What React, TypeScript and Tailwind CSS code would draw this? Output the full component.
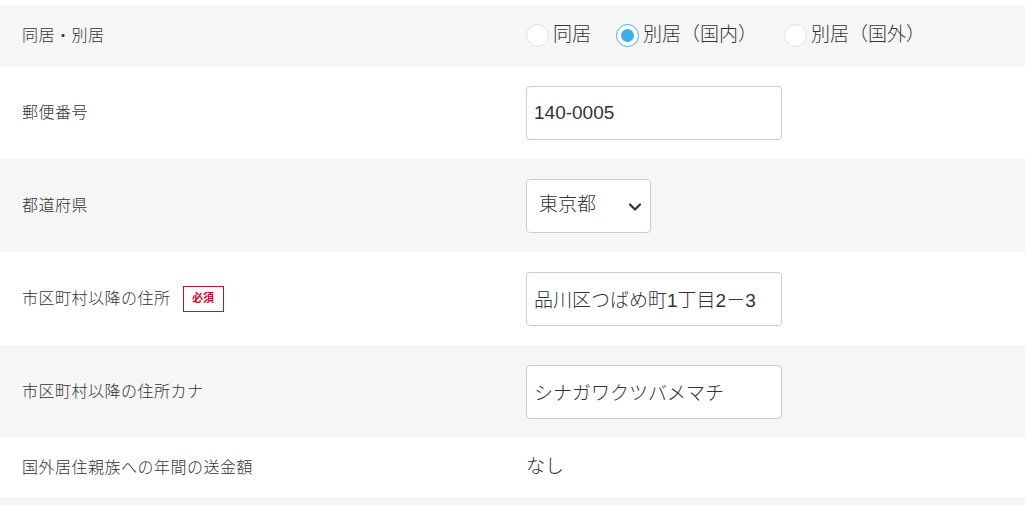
import React from 'react';

const font = { fontFamily: '"Liberation Sans", "Noto Sans CJK JP", sans-serif' };

function Radio({ label, checked }: { label: string; checked?: boolean }) {
  return (
    <label className="flex items-center cursor-pointer">
      <span
        className={`w-[23px] h-[23px] rounded-full bg-white flex items-center justify-center border ${
          checked ? 'border-[#4ab0e8]' : 'border-[#dde1ea]'
        }`}
      >
        {checked && <span className="w-[13px] h-[13px] rounded-full bg-[#3daee9]" />}
      </span>
      <span className="ml-[4px] text-[19px] text-[#333] font-light">{label}</span>
    </label>
  );
}

function Required() {
  return (
    <span className="ml-[12px] inline-flex items-center justify-center w-[41px] h-[26px] border border-[#c8102e] text-[#c8102e] text-[11px] font-semibold bg-white tracking-normal">
      必須
    </span>
  );
}

function Row({ label, gray, h, badge, children }: { label: string; gray?: boolean; h: string; badge?: boolean; children: React.ReactNode }) {
  return (
    <div className={`flex items-center ${gray ? 'bg-[#f6f6f6]' : 'bg-white'} ${h}`}>
      <div className="w-[526px] pl-[22px] flex items-center text-[16px] tracking-[0.5px] text-[#333] font-light">
        {label}
        {badge && <Required />}
      </div>
      <div className="flex items-center">{children}</div>
    </div>
  );
}

const inputCls = 'w-[256px] h-[54px] border border-[#ccc] rounded-[4px] bg-white px-[7px] text-[19px] text-[#333] font-light outline-none';

export default function App() {
  return (
    <div className="w-[1025px] h-[505px] bg-white pt-[5px] overflow-hidden" style={font}>
      <Row label="同居・別居" gray h="h-[61px]">
        <div className="flex items-center">
          <div className="w-[90px]"><Radio label="同居" /></div>
          <div className="w-[168px]"><Radio label="別居（国内）" checked /></div>
          <Radio label="別居（国外）" />
        </div>
      </Row>
      <Row label="郵便番号" h="h-[93px]">
        <input className={inputCls} defaultValue="140-0005" style={font} />
      </Row>
      <Row label="都道府県" gray h="h-[93px]">
        <div className="relative w-[125px] h-[54px] border border-[#ccc] rounded-[4px] bg-white flex items-center pl-[12px] text-[19px] text-[#333] font-light">
          東京都
          <svg className="absolute right-[8px] top-[20px]" width="14" height="14" viewBox="0 0 14 14" fill="none">
            <path d="M2 4.5 L7 9.5 L12 4.5" stroke="#333" strokeWidth="2.2" strokeLinecap="round" strokeLinejoin="round" />
          </svg>
        </div>
      </Row>
      <Row label="市区町村以降の住所" badge h="h-[93px]">
        <input className={inputCls} defaultValue="品川区つばめ町1丁目2－3" style={font} />
      </Row>
      <Row label="市区町村以降の住所カナ" gray h="h-[93px]">
        <input className={inputCls} defaultValue="シナガワクツバメマチ" style={font} />
      </Row>
      <Row label="国外居住親族への年間の送金額" h="h-[59px]">
        <span className="text-[19px] text-[#333] font-light">なし</span>
      </Row>
      <div className="h-[20px] bg-[#f6f6f6]" />
    </div>
  );
}
